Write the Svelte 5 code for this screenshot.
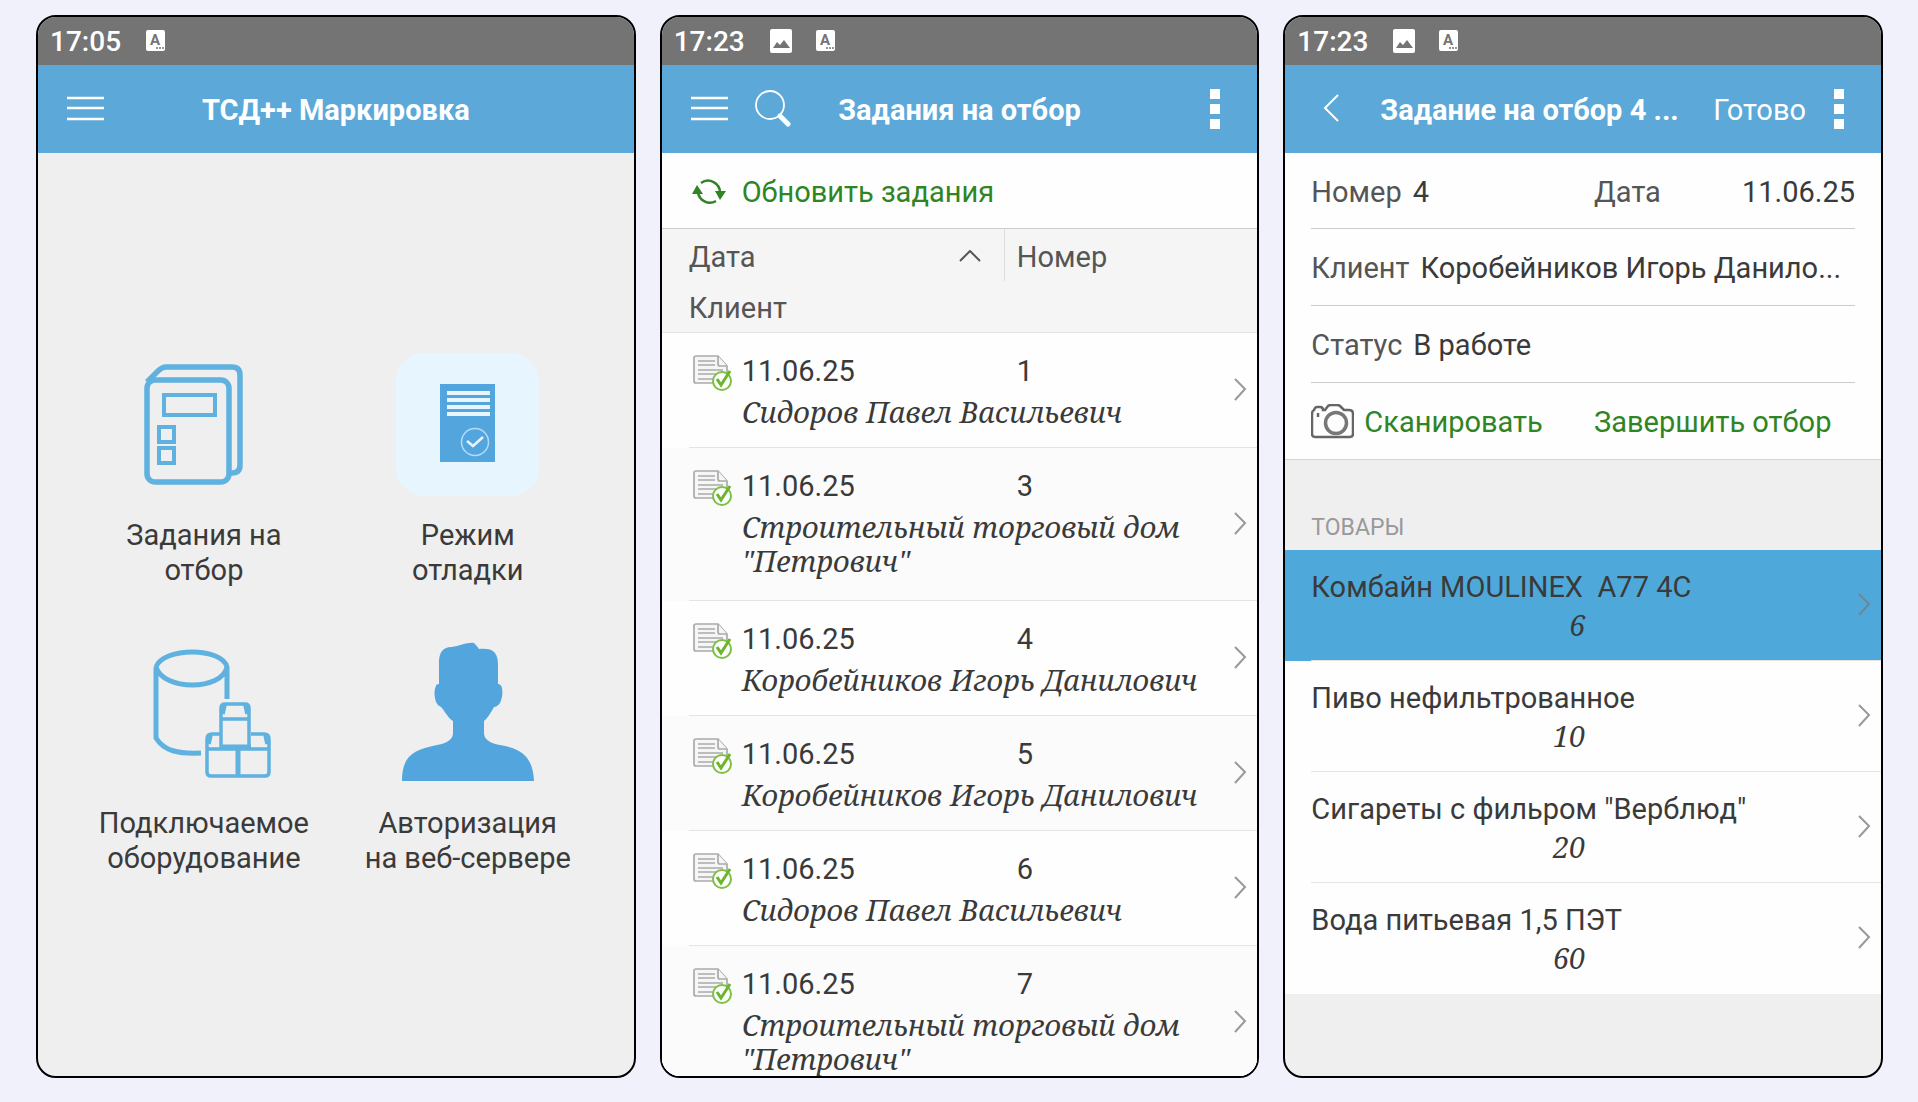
<script>
  const tiles = [
    { icon: "tasks", label: "Задания на\nотбор" },
    { icon: "debug", label: "Режим\nотладки" },
    { icon: "devices", label: "Подключаемое\nоборудование" },
    { icon: "user", label: "Авторизация\nна веб-сервере" },
  ];

  const tasks = [
    { date: "11.06.25", number: 1, client: "Сидоров Павел Васильевич" },
    { date: "11.06.25", number: 3, client: 'Строительный торговый дом "Петрович"' },
    { date: "11.06.25", number: 4, client: "Коробейников Игорь Данилович" },
    { date: "11.06.25", number: 5, client: "Коробейников Игорь Данилович" },
    { date: "11.06.25", number: 6, client: "Сидоров Павел Васильевич" },
    { date: "11.06.25", number: 7, client: 'Строительный торговый дом "Петрович"' },
  ];

  const goods = [
    { name: "Комбайн MOULINEX  А77 4С", count: 6 },
    { name: "Пиво нефильтрованное", count: 10 },
    { name: 'Сигареты с фильром "Верблюд"', count: 20 },
    { name: "Вода питьевая 1,5 ПЭТ", count: 60 },
  ];

  let selected = $state(0);
</script>

{#snippet statusBar(time, picture)}
  <div class="status">
    <span class="time">{time}</span>
    {#if picture}
      <svg width="24" height="24" viewBox="0 0 24 24">
        <path
          fill="#fff"
          fill-rule="evenodd"
          d="M3 0h18a2 2 0 0 1 2 2v20a2 2 0 0 1-2 2H3a2 2 0 0 1-2-2V2a2 2 0 0 1 2-2zM4 19h17l-6-8-4 5-3-3z"
        />
      </svg>
    {/if}
    <svg width="22" height="24" viewBox="0 0 22 24">
      <rect x="1" y="1" width="19" height="21" rx="2" fill="#fff" />
      <text x="10" y="16" class="letter">A</text>
      <path d="M11 19h2m1 0h2m1 0h2" stroke="#747474" stroke-width="1.5" />
    </svg>
  </div>
{/snippet}

{#snippet burger()}
  <button class="icon" aria-label="Меню">
    <svg width="37" height="28" viewBox="0 0 37 28">
      <path d="M0 3h37M0 13h37M0 24h37" stroke="#fff" stroke-width="2.5" />
    </svg>
  </button>
{/snippet}

{#snippet kebab()}
  <button class="icon" aria-label="Ещё">
    <svg width="10" height="40" viewBox="0 0 10 40">
      <path d="M0 0h10v10H0zM0 15h10v10H0zM0 30h10v10H0z" fill="#fff" />
    </svg>
  </button>
{/snippet}

{#snippet arrow()}
  <svg class="arrow" width="14" height="24" viewBox="0 0 14 24">
    <path d="M2 1l10 10L2 22" fill="none" stroke="currentColor" stroke-width="2" />
  </svg>
{/snippet}

<main>
  <section class="phone">
    {@render statusBar("17:05", false)}
    <header class="bar">
      <div class="side">{@render burger()}</div>
      <h1>ТСД++ Маркировка</h1>
    </header>
    <nav class="tiles">
      {#each tiles as tile}
        <button class="tile">
          <svg width="143" height="143" viewBox="0 0 143 143" fill="none" stroke="#5fb1e0">
            {#if tile.icon === "tasks"}
              <path
                stroke-width="5.5"
                d="M15 29L26 18q4-4 8-4h66q8 0 8 8v90q0 8-8 8h-3"
              />
              <rect x="15" y="27" width="82" height="102" rx="8" stroke-width="5.5" />
              <rect x="32" y="42" width="51" height="20" stroke-width="4" />
              <rect x="27" y="74" width="15" height="15" stroke-width="4" />
              <rect x="27" y="95" width="15" height="15" stroke-width="4" />
            {:else if tile.icon === "debug"}
              <rect width="143" height="143" rx="28" fill="#e7f6fe" stroke="none" />
              <rect x="44" y="31" width="55" height="78" fill="#53a5de" stroke="none" />
              <path d="M51 40h43M51 47h43M51 54h43M51 61h43" stroke="#e7f6fe" stroke-width="4" />
              <circle cx="79" cy="89" r="13.5" stroke="#b4dcf5" stroke-width="1.5" />
              <path d="M71 88l6 5 10-9" stroke="#e7f6fe" stroke-width="2.5" />
            {:else if tile.icon === "devices"}
              <path
                stroke-width="5"
                d="M24 26c7-20 66-20 71 0c-5 24-64 24-71 0v71c8 13 22 16 45 15M95 26v32"
              />
              <g stroke-width="3.5">
                <path d="M89 107V67q0-4 4-4h20q4 0 4 4v40M89 78h28M93 64l-2 9M113 64l2 9" />
                <path d="M89 93h-9q-5 0-5 5v33q0 4 4 4h54q4 0 4-4V98q0-5-5-5h-13" />
                <path d="M75 108h62M79 94l-2 9M133 94l2 9" />
                <path stroke-width="5" d="M106 107v28M89 106h30" />
              </g>
            {:else}
              <path
                fill="#53a5de"
                stroke="none"
                d="M6 140c0-23 9-31 35-36q16-3 16-12V80c-6-4-8-10-12-14q-4-2-5-5c-2-6-2-12 0-16q0-2 3-2V22c0-13 6-16 13-16 7-1 16-5 22-4q3 3 5 6c14-1 19 3 19 16v19q3 0 4 4c1 6 0 10-2 15q-3 4-6 4c-3 5-6 11-10 14v12q0 9 16 12c24 4 33 14 34 36z"
              />
            {/if}
          </svg>
          <span>{tile.label}</span>
        </button>
      {/each}
    </nav>
  </section>

  <section class="phone">
    {@render statusBar("17:23", true)}
    <header class="bar">
      <div class="side">
        {@render burger()}
        <button class="icon" aria-label="Поиск">
          <svg width="36" height="38" viewBox="0 0 36 38" fill="none" stroke="#fff">
            <circle cx="15" cy="15" r="14" stroke-width="1.8" />
            <path d="M25 26l8 8" stroke-width="5" stroke-linecap="round" />
          </svg>
        </button>
      </div>
      <h1>Задания на отбор</h1>
      <div class="side end">{@render kebab()}</div>
    </header>
    <div class="refresh">
      <button class="link">
        <svg width="34" height="28" viewBox="0 0 34 28">
          <g fill="none" stroke="#2f8424" stroke-width="2.5">
            <path d="M9 4A12 12 0 0 1 28 14M24 22A12 12 0 0 1 6 13" />
          </g>
          <path d="M23 12h11l-6 9zM0 15h11L5 6z" fill="#2f8424" />
        </svg>
        Обновить задания
      </button>
    </div>
    <table class="tasks">
      <colgroup>
        <col class="pad" />
        <col class="doc" />
        <col class="date" />
        <col />
        <col class="go" />
      </colgroup>
      <thead>
        <tr>
          <td></td>
          <th colspan="2">
            <button class="sort">
              Дата
              <svg width="24" height="14" viewBox="0 0 24 14">
                <path d="M2 11L12 1l10 10" fill="none" stroke="#555" stroke-width="2" />
              </svg>
            </button>
          </th>
          <th class="split" colspan="2">Номер</th>
        </tr>
        <tr>
          <td></td>
          <th colspan="4">Клиент</th>
        </tr>
      </thead>
      {#each tasks as task}
        <tbody class:long={task.client.length > 30}>
          <tr class="first">
            <td rowspan="2"></td>
            <td class="line" rowspan="2">
              <svg class="docicon" width="40" height="38" viewBox="0 0 40 38">
                <g fill="#f6f6f6" stroke="#aaa" stroke-width="1.7">
                  <path d="M3 1h22l9 10v17H3q-2 0-2-2V3q0-2 2-2z" />
                  <path d="M25 1v8q0 2 2 2h7" />
                  <path d="M5 6h17M5 10h17M5 15h25M5 19h22M5 24h15" />
                </g>
                <circle cx="29" cy="26" r="9" fill="#fff" stroke="#7cc142" stroke-width="2" />
                <path d="M24 24l4 6 9-14" fill="none" stroke="#6cb52d" stroke-width="3" />
              </svg>
            </td>
            <td>{task.date}</td>
            <td class="number">{task.number}</td>
            <td class="line go" rowspan="2">{@render arrow()}</td>
          </tr>
          <tr class="second">
            <td class="line client" colspan="2">{task.client}</td>
          </tr>
        </tbody>
      {/each}
    </table>
  </section>

  <section class="phone">
    {@render statusBar("17:23", true)}
    <header class="bar detail">
      <button class="icon back" aria-label="Назад">
        <svg width="18" height="30" viewBox="0 0 18 30">
          <path d="M16 1L3 14l13 13" fill="none" stroke="#fff" stroke-width="2" />
        </svg>
      </button>
      <h1>Задание на отбор 4 ...</h1>
      <button class="done">Готово</button>
      {@render kebab()}
    </header>
    <form class="card">
      <div class="row">
        <div class="field number">
          <label for="number">Номер</label>
          <input id="number" value="4" readonly />
        </div>
        <div class="field right">
          <label for="date">Дата</label>
          <input id="date" value="11.06.25" readonly />
        </div>
      </div>
      <div class="row field">
        <label for="client">Клиент</label>
        <input id="client" value="Коробейников Игорь Данило..." readonly />
      </div>
      <div class="row field">
        <label for="state">Статус</label>
        <input id="state" value="В работе" readonly />
      </div>
      <div class="row">
        <button type="button" class="link scan">
          <svg width="43" height="38" viewBox="0 0 43 38" fill="none" stroke="#666">
            <path
              stroke-width="2.5"
              d="M4 33h35q3 0 3-3V10q0-4-4-4h-5l-4-4q-1-1-3-1h-6q-2 0-3 1l-3 4h-2q0-3-3-3H6q-2 0-3 3-2 1-2 4v20q0 3 3 3z"
            />
            <circle cx="25" cy="19" r="10.5" stroke-width="3.5" stroke="#777" />
            <path d="M7 9v4" stroke-width="2.5" />
          </svg>
          Сканировать
        </button>
        <button type="button" class="link">Завершить отбор</button>
      </div>
    </form>
    <h2>ТОВАРЫ</h2>
    <table class="goods">
      <colgroup>
        <col class="pad" />
        <col class="count" />
        <col />
        <col class="go" />
      </colgroup>
      {#each goods as item, i}
        <tbody class:selected={selected === i} onclick={() => (selected = i)}>
          <tr class="first">
            <td rowspan="2"></td>
            <td class="name" colspan="2">{item.name}</td>
            <td class="line go" rowspan="2">{@render arrow()}</td>
          </tr>
          <tr class="second">
            <td class="line amount">{item.count}</td>
            <td class="line"></td>
          </tr>
        </tbody>
      {/each}
    </table>
  </section>
</main>

<style>
  :global(body) {
    margin: 0;
    background: #f1f1fc;
  }

  main {
    display: flex;
    gap: 24px;
    box-sizing: border-box;
    height: 100vh;
    padding: 15px 35px 24px 36px;
    font-family: Roboto, sans-serif;
    font-size: 29px;
    line-height: 35px;
    color: #3a3a3a;
  }

  button,
  input {
    padding: 0;
    border: none;
    outline: none;
    background: none;
    font: inherit;
    color: inherit;
  }

  button {
    cursor: pointer;
  }

  svg {
    display: block;
    flex-shrink: 0;
  }

  .phone {
    display: flex;
    flex: 1;
    flex-direction: column;
    min-width: 0;
    overflow: hidden;
    border: 2px solid #000;
    border-radius: 20px;
    background: #efefef;
  }

  .status {
    display: flex;
    flex-shrink: 0;
    align-items: center;
    gap: 22px;
    height: 48px;
    padding: 0 12px;
    background: #747474;
    color: #fff;
  }

  .time {
    margin-right: 2px;
    font-size: 28px;
    font-weight: 500;
  }

  .letter {
    font-size: 15px;
    font-weight: 700;
    text-anchor: middle;
    fill: #747474;
  }

  .bar {
    display: grid;
    flex-shrink: 0;
    grid-template-columns: 1fr auto 1fr;
    align-items: center;
    height: 88px;
    padding: 0 29px;
    background: #5ba8d9;
    color: #fff;
  }

  .side {
    display: flex;
    align-items: center;
    gap: 27px;
  }

  .side.end {
    justify-content: flex-end;
    padding-right: 8px;
  }

  h1 {
    margin: 0;
    padding-top: 3px;
    font-size: 29px;
    font-weight: 700;
    white-space: nowrap;
  }

  .bar.detail {
    display: flex;
    padding-right: 37px;
  }

  .back {
    margin: 0 40px 0 8px;
  }

  .detail h1 {
    flex: 1;
  }

  .done {
    padding: 3px 28px 0 0;
  }

  .tiles {
    display: grid;
    flex: 1;
    grid-template-columns: 1fr 1fr;
    align-content: center;
    row-gap: 53px;
    padding: 0 34px;
  }

  .tile {
    display: flex;
    flex-direction: column;
    align-items: center;
    gap: 22px;
    white-space: pre-line;
  }

  .refresh {
    flex-shrink: 0;
    padding: 22px 30px 18px;
    border-bottom: 1px solid #ccc;
    background: #fefefe;
  }

  .link {
    display: flex;
    align-items: center;
    gap: 16px;
    color: #2f8424;
  }

  table {
    width: 100%;
    table-layout: fixed;
    border-spacing: 0;
    background: #fefefe;
  }

  td,
  th {
    padding: 0;
    text-align: left;
    vertical-align: top;
    font-weight: 400;
  }

  .pad {
    width: 27px;
  }

  .doc {
    width: 53px;
  }

  .date {
    width: 44%;
  }

  .count {
    width: 46%;
  }

  col.go {
    width: 48px;
  }

  thead {
    background: #f5f5f5;
    color: #555;
  }

  thead td,
  thead th {
    height: 48px;
    padding-top: 4px;
    vertical-align: middle;
  }

  thead tr:last-child > * {
    height: 47px;
    border-bottom: 1px solid #e4e4e4;
  }

  .sort {
    display: flex;
    align-items: center;
    justify-content: space-between;
    width: 100%;
    padding-right: 22px;
  }

  .split {
    padding-left: 12px;
    border-left: 1px solid #ddd;
  }

  .tasks tbody:nth-of-type(even) {
    background: #fbfbfb;
  }

  .line {
    border-bottom: 1px solid #e4e4e4;
  }

  .first td {
    padding-top: 21px;
  }

  .tasks .number {
    padding-left: 13px;
  }

  .docicon {
    margin: 1px 0 0 4px;
  }

  .first td.go {
    padding: 0 10px 0 0;
    vertical-align: middle;
    color: #999;
  }

  .arrow {
    margin-left: auto;
  }

  .client,
  .amount {
    font-family: "Noto Serif", "DejaVu Serif Condensed", "DejaVu Serif", serif;
    font-size: 29px;
    font-style: italic;
    line-height: 34px;
  }

  .client {
    padding: 6px 0 18px;
  }

  .long .client {
    padding-bottom: 22px;
  }

  .card {
    flex-shrink: 0;
    padding: 0 26px;
    border-bottom: 1px solid #d4d4d4;
    background: #fefefe;
  }

  .row {
    display: flex;
    align-items: center;
    box-sizing: border-box;
    height: 77px;
    padding-top: 3px;
    border-bottom: 1px solid #ccc;
  }

  .row:first-child {
    height: 76px;
  }

  .row:last-child {
    height: 76px;
    border-bottom: none;
  }

  .field {
    display: flex;
    gap: 11px;
  }

  .field.number {
    width: 52%;
  }

  .field.right {
    flex: 1;
    min-width: 0;
  }

  .right input {
    text-align: right;
  }

  label {
    color: #555;
  }

  input {
    flex: 1;
    min-width: 0;
    text-overflow: ellipsis;
  }

  .scan {
    gap: 10px;
    width: 52%;
  }

  h2 {
    flex-shrink: 0;
    margin: 0;
    padding: 50px 26px 5px;
    font-size: 23px;
    font-weight: 400;
    color: #999;
  }

  .goods .pad {
    width: 26px;
  }

  .name {
    white-space: pre;
  }

  .goods .first .name {
    padding-top: 20px;
  }

  .amount {
    padding: 3px 0 18px;
    text-align: right;
  }

  .goods .amount {
    text-indent: 2px;
  }

  .goods tbody:last-child .line {
    border-bottom-color: transparent;
  }

  .selected {
    background: #4ea9da;
  }

  .goods .selected .go {
    color: #6d8796;
  }
</style>
